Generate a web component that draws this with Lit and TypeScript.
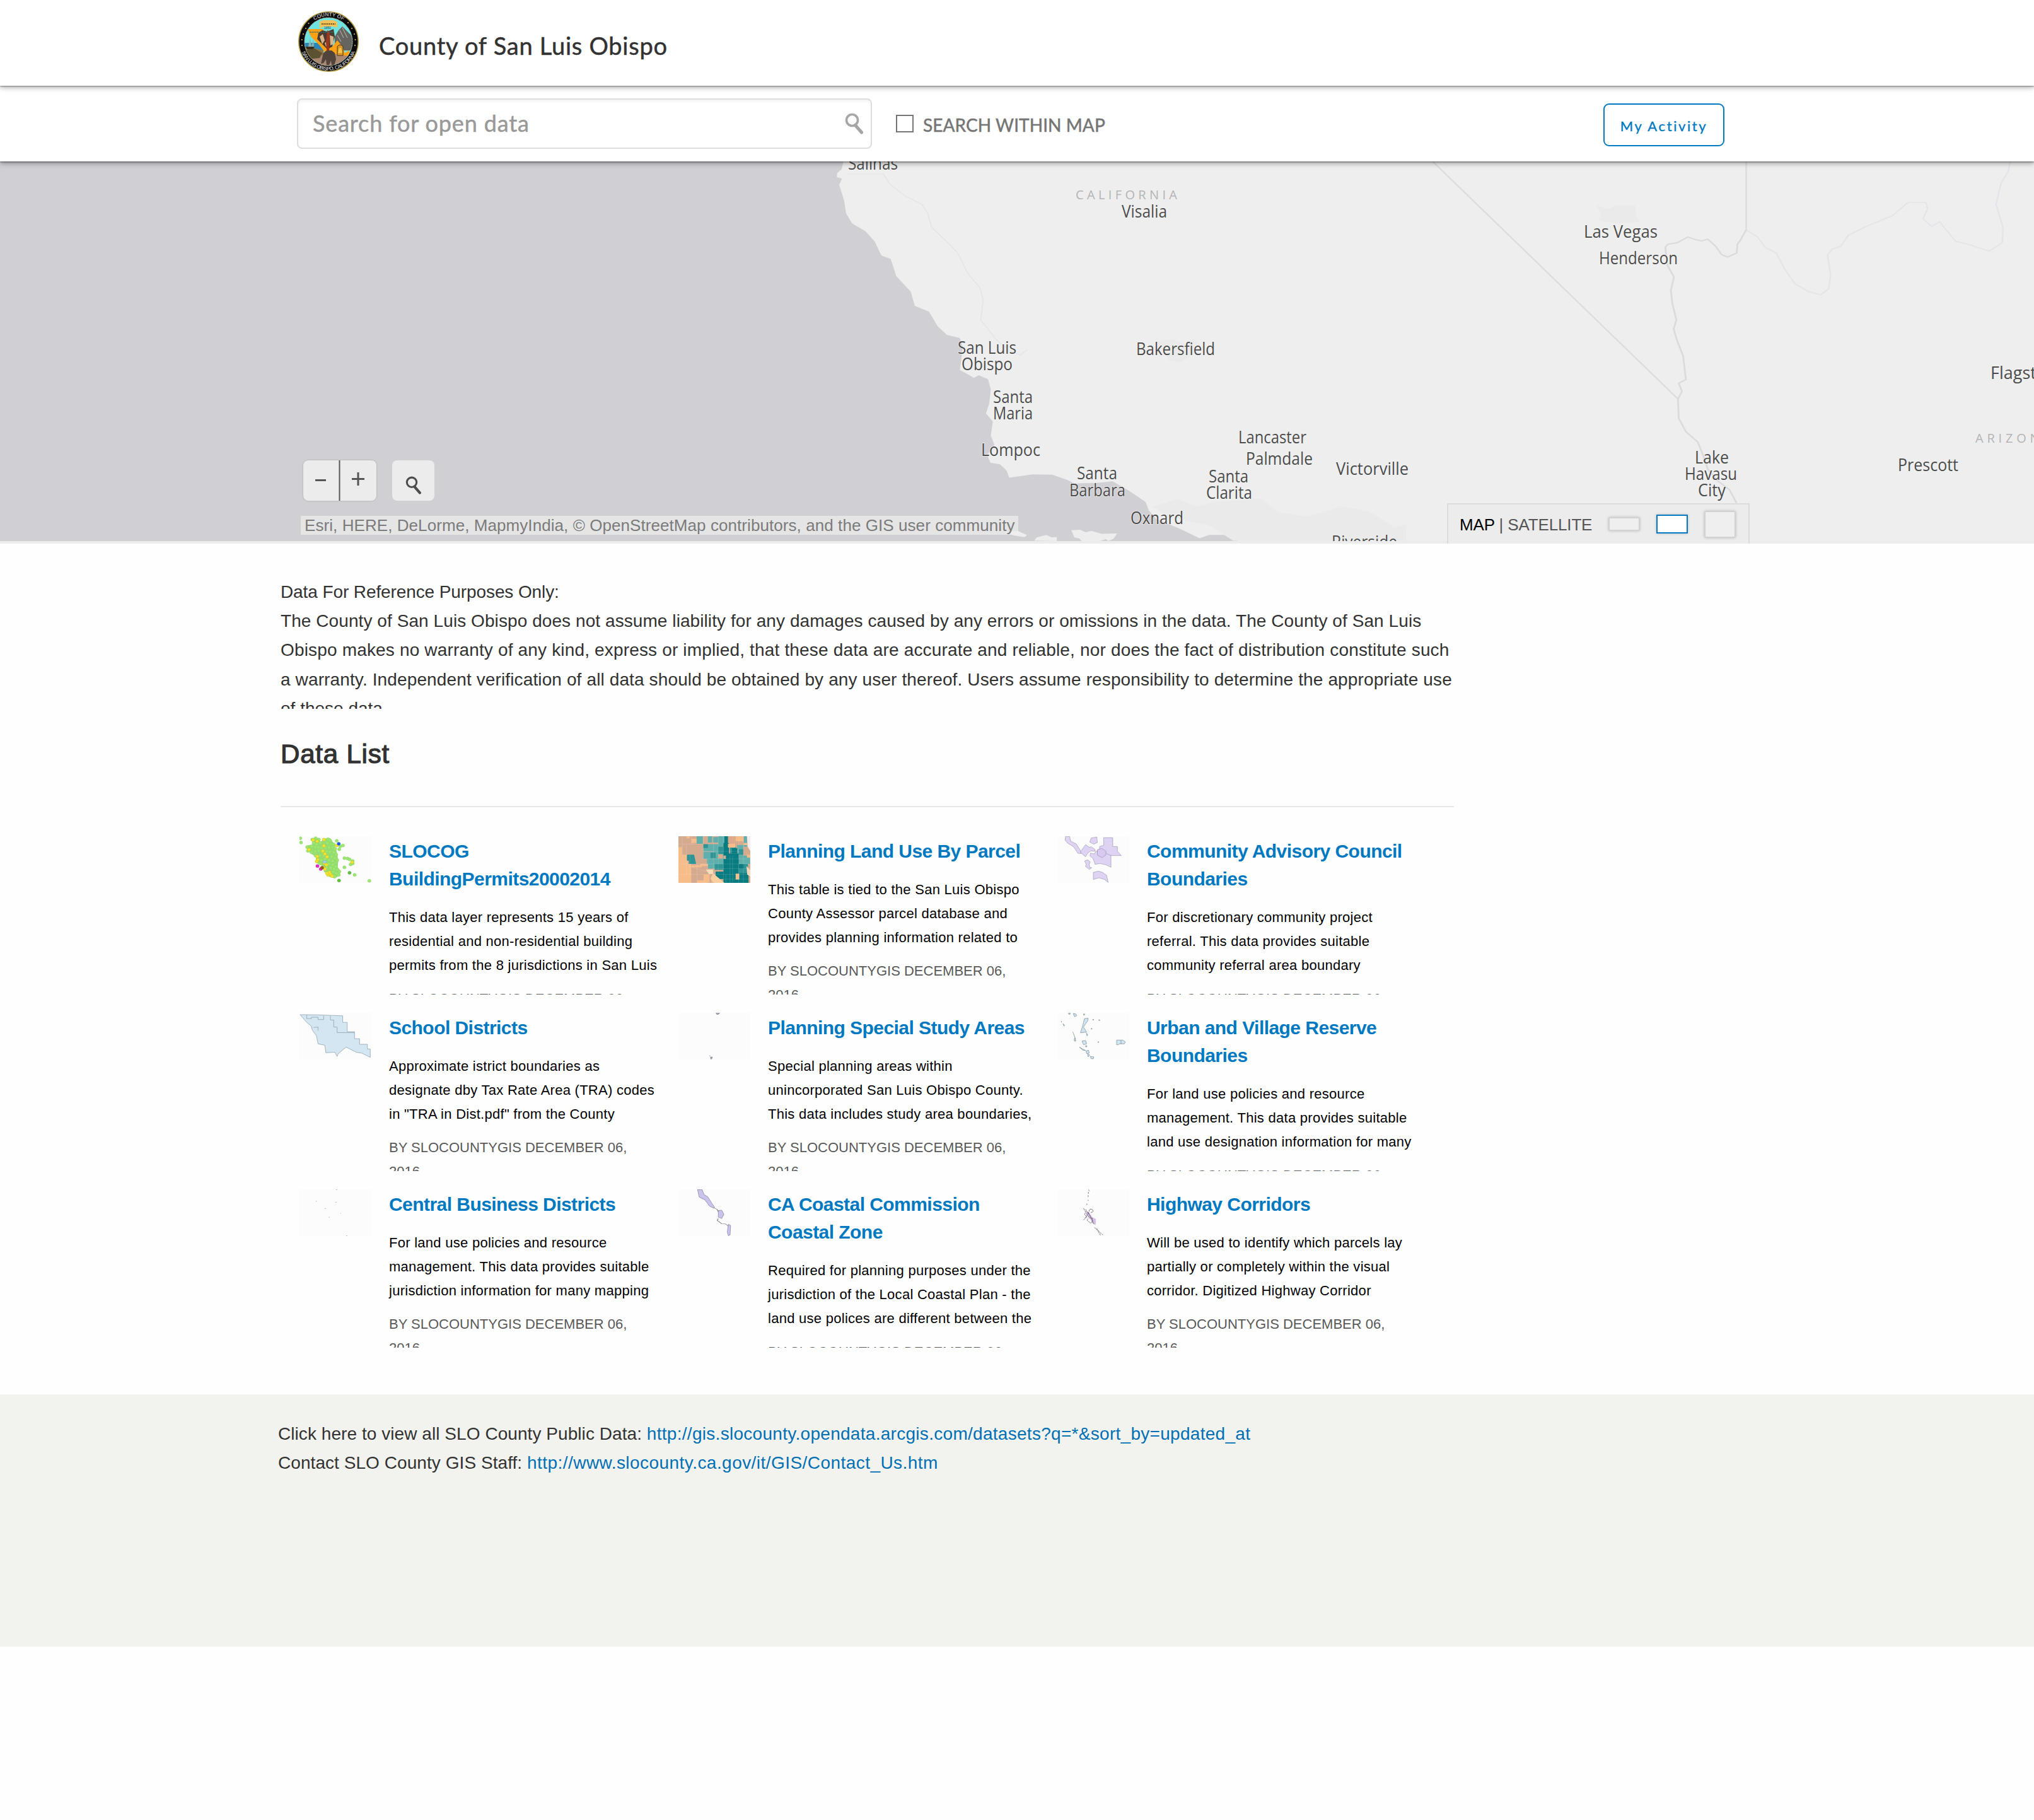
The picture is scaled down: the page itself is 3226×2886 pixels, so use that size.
import { LitElement, html, svg, css } from "lit";
import { customElement, property } from "lit/decorators.js";

type Label = [text: string, x: number, baseline: number, width: number];

const CITIES: Label[] = [
  ["Salinas", 1345, 268.5, 79], ["Visalia", 1779, 344.5, 72],
  ["San Luis", 1519, 560.5, 93], ["Obispo", 1525, 587, 81],
  ["Bakersfield", 1802, 562.5, 125], ["Santa", 1575, 638.5, 63], ["Maria", 1575, 665, 63],
  ["Lompoc", 1556, 722.5, 94], ["Santa", 1708, 760, 64], ["Barbara", 1696, 787, 89],
  ["Oxnard", 1793, 830.5, 84], ["Lancaster", 1964, 702.5, 108], ["Palmdale", 1976, 736.5, 106],
  ["Santa", 1917, 764.5, 63], ["Clarita", 1913, 790.5, 73], ["Victorville", 2119, 752.5, 115],
  ["Riverside", 2112, 868.5, 104], ["Las Vegas", 2512, 376.5, 117], ["Henderson", 2536, 418.5, 125],
  ["Flagstaff", 3157, 600.5, 106], ["Prescott", 3010, 746.5, 96],
  ["Lake", 2688, 734.5, 54], ["Havasu", 2672, 760.5, 83], ["City", 2693, 786.5, 44],
];

const COAST =
  "M0 30 H92 L86 70 L75 84 L74 100 L87 106 L80 130 L92 190 L97 240 L112 280 L145 310 L168 350 L185 405 L208 418 L222 485 L258 545 L268 600 L303 622 L325 680 L348 713 L380 725 L387 760 L385 790 L380 850 L395 862 L415 880 L427 870 L450 885 L457 925 L453 980 L445 1018 L462 1050 L457 1105 L466 1140 L448 1180 L456 1210 L480 1216 L496 1240 L503 1268 L560 1255 L610 1256 L645 1275 L665 1290 L720 1288 L760 1282 L800 1318 L842 1362 L850 1395 L868 1428 L930 1468 L976 1503 L1000 1490 L1055 1490 L1075 1520 H-900 V30 Z";

const mapArt = svg`
  <rect x="0" y="256" width="3226" height="602" fill="#eeeeee"></rect>
  <rect x="0" y="256" width="800" height="602" fill="#d0cfd4"></rect>
  <g transform="translate(1280 240) scale(.63776 .40816)">
    <path d=${COAST} fill="#d0cfd4"></path>
    <path d="M490 1480 l35 -5 l22 16 l-6 8 l-24 -6z M565 1512 l6 -12 l24 -10 l14 10 l12 -2 l0 16z M657 1472 l22 -2 l14 10 l14 -6 l26 12 l38 -2 l-8 20 l-14 10 l-6 -8 l-18 10 l-40 2 l-8 -14 l-12 -4z" fill="#ededed"></path>
    <path d="M100 88 L190 88 L205 125 L240 170 L285 205 L300 240 L310 295 L350 355 L375 395 L400 475 L430 530 L438 580 L432 655 L470 730 L500 770 L530 792 L548 770" fill="none" stroke="#e5e5e7" stroke-width="3"></path>
    <path d="M860 1380 l60 -30 l50 30 l50 -20 l110 -10 l40 50 l70 20 l90 -40 l70 20 l60 60 l30 -10 v63 h-430 l-60 -60 l-60 -20 l-50 -20z M870 740 l40 -10 l30 20 l20 -20 l20 20 l-30 50 l-20 20 l-30 -10z" fill="#eaeaea"></path>
  </g>
  <g transform="translate(2240 130) scale(.62883 .47194)" fill="none" stroke-linejoin="round">
    <path d="M465 415 l30 10 l20 -10 h48 v30 l12 25 l-60 5 l-45 -10 l5 -25z" fill="#eaeaea"></path>
    <path d="M842 497 L870 520 L890 555 L918 575 L940 630 L965 678 L1000 705 L1030 715 L1050 695 L1055 650 L1047 580 L1060 560 L1080 553 L1100 515 L1150 482 L1210 450 L1250 405 L1295 405 L1300 425 L1288 460 L1310 485 L1330 470 L1370 535 L1400 545 L1455 568 L1488 540 L1490 490 L1472 410 L1485 340 L1503 300 L1508 268" stroke="#e5e5e9" stroke-width="4"></path>
    <path d="M52 268 L670 1065 M842 268 V497" stroke="#dcdcdc" stroke-width="4"></path>
    <path d="M842 497 L828 530 L820 545 L818 575 L795 588 L780 580 L765 552 L745 528 L730 534 L715 530 L695 521 L668 540 L645 545 L638 555 L643 615 L660 655 L652 700 L656 745 L666 800 L659 830 L668 870 L683 920 L690 1000 L672 1012 L680 1040 L670 1065 L672 1130 L690 1175 L720 1210 L735 1260 L745 1300 L770 1340 L800 1370 L818 1415" stroke="#dbdbde" stroke-width="4.5"></path>
  </g>
  <g class="city">${CITIES.map(
    ([t, x, y, w]) => svg`<text x=${x} y=${y} textLength=${w} lengthAdjust="spacingAndGlyphs">${t}</text>`
  )}</g>
  <g class="state">
    <text x="1706" y="316" textLength="161">CALIFORNIA</text>
    <text x="3133" y="702" textLength="120">ARIZONA</text>
  </g>`;

const GREEN = [
  [88,118],[91,138],[135,124],[148,118],[160,124],[184,126],[196,122],[204,128],[140,140],[152,146],[166,140],[180,148],[194,142],[208,146],[218,146],
  [115,160],[124,168],[118,178],[134,156],[146,160],[158,160],[170,164],[186,164],[200,162],[214,160],[224,168],[230,130],[244,156],[254,152],[240,170],
  [132,184],[146,180],[160,178],[174,184],[190,180],[204,182],[218,184],[228,196],[148,200],[164,200],[180,200],[196,204],[210,204],[222,212],[232,222],
  [158,218],[170,222],[184,218],[200,222],[214,226],[166,238],[184,240],[200,240],[214,244],[226,252],[190,256],[206,258],[220,264],[232,268],
  [186,272],[202,276],[216,278],[228,284],[240,276],[238,292],[210,290],[222,300],[260,212],[272,214],[280,218],[292,226],[292,238],[284,242],[260,256],[300,292],[357,320],
];
const YELLOW = [[138,126],[154,132],[180,124],[180,154],[122,172],[176,178],[184,192],[192,206],[154,204],[156,220],[152,228],[182,236],[190,244],[178,258],[184,264],[230,152],[290,232],[202,280],[206,290],[212,298],[196,292],[192,284]];

const dots = (pts: number[][], fill: string, stroke: string) =>
  pts.map(([x, y]) => svg`<ellipse cx=${x} cy=${y} rx="6.5" ry="7.5" fill=${fill} stroke=${stroke} stroke-width="1"></ellipse>`);

const tiles = (fill: string, list: number[][]) =>
  list.map(([x, y, w, h]) => svg`<rect x=${x} y=${y} width=${w} height=${h} fill=${fill}></rect>`);

const THUMBS: Record<string, { box: string; art: unknown }> = {
  permits: {
    box: "85 108 280 222",
    art: svg`<path d="M135 116 L160 116 L168 136 L178 120 L205 118 L220 145 L232 190 L236 225 L234 255 L246 275 L240 296 L222 308 L200 300 L186 280 L170 245 L150 235 L148 205 L128 190 L112 165 L114 152 L134 148z" fill="#96de70"></path>
      ${dots(GREEN, "#9ce672", "#86cf62")}${dots(YELLOW, "#f2e32c", "#b4b23c")}
      ${dots([[238,144]], "#2158e0", "#2158e0")}${dots([[183,230]], "#9fd0ea", "#7aaaaa")}
      ${dots([[155,250],[168,264]], "#e52ac0", "#b0209a")}${dots([[173,258]], "#9a5a1e", "#7a4414")}
      ${dots([[280,282],[239,319]], "#62c043", "#4a9a35")}`,
  },
  parcels: {
    box: "61 108 280 222",
    art: svg`<rect x="61" y="108" width="280" height="222" fill="#d5ab90"></rect>
      ${tiles("#f6bd8b", [[61,160,14,80],[61,240,50,90],[76,196,22,44],[92,108,14,10],[112,120,22,20],[146,240,30,10],[112,246,40,10],[160,290,22,38],[190,300,30,28],[284,108,30,24],[134,318,40,12]])}
      ${tiles("#5fb0ad", [[132,108,24,36],[158,146,40,34],[158,182,40,34],[172,216,30,24],[176,108,16,30],[196,112,20,26],[216,108,28,50],[198,146,26,36],[176,240,26,22],[198,180,40,66],[290,150,24,50],[296,200,44,40],[316,108,12,50]])}
      ${tiles("#2f9494", [[158,146,18,18],[186,186,20,26],[202,240,34,28],[216,180,22,12],[262,160,24,30],[296,170,18,26],[296,240,36,46],[216,158,20,22]])}
      ${tiles("#087c80", [[236,140,22,60],[240,108,14,50],[246,190,50,50],[236,216,60,114],[206,276,34,36],[262,210,32,60],[296,240,20,22],[284,284,50,46],[270,165,20,25]])}
      ${tiles("#f6bd8b", [[254,144,28,18],[284,286,14,28],[316,140,14,10],[328,196,13,14]])}
      ${tiles("#dfa98b", [[256,108,28,34],[216,194,18,20]])}
      <path d="M94 196 h28 l8 44 h-28 v-16 h-8z" fill="#2f9494"></path>
      <path d="M196 284 l44 46 h-40 l-14 -20z" fill="#f9cfa0"></path>
      <path d="M168 266 h28 v22 h-16z" fill="#f9dcb8"></path>
      <path d="M328 108 h13 v70 l-10 -20z" fill="#f1efee"></path>
      <path d="M326 250 l15 20 v30 l-12 -10z" fill="#f3d6bb"></path>
      <path d="M61 146 H158 M76 108 V240 M92 146 V290 M106 196 V290 M61 240 H176 M76 290 H186 M134 240 V330 M160 290 V330 M112 108 V146 M61 290 H76 M100 250 l80 30 M158 108 V216 M176 216 V262 M198 108 V290 M216 108 V290 M236 108 V330 M158 180 H300 M158 216 H341 M176 240 H341 M198 262 H341 M246 290 V330 M262 200 V330 M272 200 V330 M296 120 V330 M314 108 V330 M198 290 H341 M206 312 H341" fill="none" stroke="#ffffff" stroke-opacity=".25" stroke-width="1.5"></path>`,
  },
  councils: {
    box: "40 108 280 222",
    art: svg`<g fill="#dfd3f4" stroke="#77718a" stroke-width="1.2">
      <path d="M72 108 l16 1 l4 22 l22 14 l16 32 l2 14 l-12 -2 l-16 -30 l-24 -18 l-10 -14z"></path>
      <path d="M172 116 l22 -4 l2 26 l-14 8 l-16 -10z M220 115 h36 v42 h18 v22 l15 21 h-40 v56 l-20 -12 l-24 -6 l-18 4 l-8 -28 l-12 -12 l2 -14 l14 4 l10 -14 l10 4 l2 -26 l16 -4z"></path>
      <path d="M130 182 l8 -14 l12 -20 l14 12 l8 -2 l14 12 l2 10 l-18 -2 l-14 14 l-6 14 l-14 -14z"></path>
      <path d="M146 226 l12 -6 l10 10 l-4 12 l2 14 l8 2 l-10 8 l-14 -14 l2 -12z M180 280 l20 -6 l16 6 l16 14 l6 34 l-14 -14 l-22 -8 l-22 8z"></path>
      <path d="M196 172 l18 -6 l16 14 l-2 18 l-14 12 l-18 -12z M230 190 l19 10" fill="#d8c8f2"></path></g>`,
  },
  schools: {
    box: "39 71 128 200",
    art: svg`<g fill="#d3e6f2" stroke="#8599a6" stroke-width="1.1">
      <path d="M40 79 L72 80 L116 84 V112 H124 V152 H137 V182 H146 V206 H160 V226 H165 V262 L150 244 L140 240 L122 218 L108 246 L106 258 L102 240 L86 242 L84 210 L72 204 L69 168 L62 146 L60 128 L52 112 Z"></path>
      <path d="M52 80 v16 h8 v-6 h12 v10 h10 v-16 M94 84 v18 h6 v30 h6 v24 h31 M64 134 l8 -2 v16" fill="none"></path></g>`,
  },
  study: {
    box: "711 71 128 200",
    art: svg`<path d="M778 70 h7 l-3 8 l-3 -1z M766 254 l2 4 M768 262 l3 -2 v6 l-2 4z" fill="#aaaabb" stroke="#666677" stroke-width="1"></path>`,
  },
  urban: {
    box: "40 71 280 200",
    art: svg`<g fill="#cfe5f1" stroke="#6d7d88" stroke-width="1.6">
      <path d="M84 72 h6 v5 h-6z M102 74 l10 2 l3 8 l-8 4z M142 76 h4 v4 h-4z M178 99 h3 v3 h-3z M202 100 l4 3 l-4 2z M55 108 h2 v2 h-2z M62 118 l6 6 l-2 4z M146 96 l14 -2 l-2 12 l-8 12 l-8 14 l12 22 l-24 2 l8 -26 l4 -18z"></path>
      <path d="M153 158 l5 6 l-2 6z M172 138 h3 v3 h-3z M100 152 l6 18 l6 22 h-6 v-10 l6 -2 M198 195 h3 v3 h-3z M136 192 l14 -2 l4 14 l-12 4z M150 212 h5 v5 h-5z M126 218 l12 8 l12 6 l-10 0z M152 234 l10 -2 l2 12 l-10 2z M158 248 l8 4 l-6 8z M168 258 l14 2 l-2 8 h-8z"></path>
      <path d="M271 188 h24 l10 8 l-4 8 h-18 l-6 4 h-6z M288 190 v14"></path></g>`,
  },
  business: {
    box: "39 827 128 200",
    art: svg`<path d="M104 828 h2 M68 878 h2 M103 882 h2 M84 909 h2 M112 930 h1 M91 946 h2 M122 1025 h2" stroke="#a4a4a8" stroke-width="2"></path>`,
  },
  coastal: {
    box: "711 827 128 200",
    art: svg`<path d="M745 828 h8 l4 22 l6 8 l8 30 l4 14 l-1 6 l-8 -10 l-8 -26 l-10 -12z M782 918 l6 -2 l4 18 l-4 18 l-6 -6z M800 976 l4 6 l-1 40 l-3 4 l-2 -16z" fill="#cbc3ec" stroke="#77718f" stroke-width="1"></path>
      <path d="M774 905 l6 8 l2 10 M782 952 l-2 8 l8 14 l6 0 l6 10" fill="none" stroke="#777777" stroke-width="1.4"></path>`,
  },
  highway: {
    box: "40 827 280 200",
    art: svg`<path d="M150 918 l14 8 l12 20 l14 8 v24 l-16 -14 l-18 -26z" fill="#d5c0e6"></path>
      <path d="M161 828 l4 6 M161 838 v8 M160 852 v8 M160 872 v4 M155 888 v6 M142 908 l8 16 l-4 12 l10 8 l-14 14 M150 912 l10 20 l6 -20 l10 0 l4 10 l-12 6 M148 950 l14 -20 l16 30 l-8 12 l-14 -12 l4 -10 M152 930 l12 18 l12 2 M176 950 v20 l12 8 M160 926 l22 46 M184 990 l12 12 l8 14 l4 8 M192 994 l16 20 l10 8" fill="none" stroke="#6d6676" stroke-width="2.2" stroke-dasharray="9 2"></path>`,
  },
};

interface Dataset { thumb: string; title: string[]; text: string[]; }

const DATASETS: Dataset[] = [
  { thumb: "permits", title: ["SLOCOG", "BuildingPermits20002014"], text: ["This data layer represents 15 years of", "residential and non-residential building", "permits from the 8 jurisdictions in San Luis"] },
  { thumb: "parcels", title: ["Planning Land Use By Parcel"], text: ["This table is tied to the San Luis Obispo", "County Assessor parcel database and", "provides planning information related to"] },
  { thumb: "councils", title: ["Community Advisory Council", "Boundaries"], text: ["For discretionary community project", "referral. This data provides suitable", "community referral area boundary"] },
  { thumb: "schools", title: ["School Districts"], text: ["Approximate istrict boundaries as", "designate dby Tax Rate Area (TRA) codes", "in \"TRA in Dist.pdf\" from the County"] },
  { thumb: "study", title: ["Planning Special Study Areas"], text: ["Special planning areas within", "unincorporated San Luis Obispo County.", "This data includes study area boundaries,"] },
  { thumb: "urban", title: ["Urban and Village Reserve", "Boundaries"], text: ["For land use policies and resource", "management. This data provides suitable", "land use designation information for many"] },
  { thumb: "business", title: ["Central Business Districts"], text: ["For land use policies and resource", "management. This data provides suitable", "jurisdiction information for many mapping"] },
  { thumb: "coastal", title: ["CA Coastal Commission", "Coastal Zone"], text: ["Required for planning purposes under the", "jurisdiction of the Local Coastal Plan - the", "land use polices are different between the"] },
  { thumb: "highway", title: ["Highway Corridors"], text: ["Will be used to identify which parcels lay", "partially or completely within the visual", "corridor. Digitized Highway Corridor"] },
];

@customElement("county-seal")
export class CountySeal extends LitElement {
  static styles = css`
    :host { display: block; width: 96px; height: 96px; }
    svg { display: block; width: 100%; height: 100%; }
    text { font: 8px "Liberation Sans", sans-serif; fill: #e6e6e6; }
    .scroll { font-size: 5px; fill: #1c3c50; }
  `;
  render() {
    return html`<svg viewBox="0 0 96 96">
      <defs>
        <clipPath id="disc"><circle cx="48" cy="48" r="38"></circle></clipPath>
        <path id="top" d="M7.500 48 A40.500 40.500 0 0 1 88.500 48"></path>
        <path id="low" d="M2.500 48 A45.500 45.500 0 0 0 93.500 48"></path>
      </defs>
      <circle cx="48" cy="48" r="47.200" fill="#0b0b0b" stroke="#b9a24a" stroke-width="1.600"></circle>
      <g clip-path="url(#disc)">
        <rect width="96" height="96" fill="#6fe3e0"></rect>
        <path d="M58 40 L64 30 L70 24 L76 30 L84 38 L90 62 H58z" fill="#66645e"></path>
        <path d="M66 30 l6 12 M70 26 l8 16 M62 38 l6 10" stroke="#aaa59a" stroke-width="1.300"></path>
        <path d="M8 50 H40 V66 H8z" fill="#2d86b6"></path>
        <path d="M8 56 l16 2 l16 4 v10 H8z" fill="#8a7344"></path>
        <path d="M15 28 H40 L42 44 L54 56 L62 46 L70 56 L74 66 L80 62 L84 70 L64 72 L46 70 L34 54 L26 46 L20 40z" fill="#ffa114"></path>
        <path d="M8 66 L40 70 L46 62 L60 68 L88 72 V96 H8z" fill="#a98770"></path>
        <path d="M10 62 l14 -4 l14 8 l-4 8 l-20 2z" fill="#5c5130"></path>
        <path d="M32 34 l6 -4 l8 2 l10 -4 l2 12 l-4 16 l-8 4 l-8 -8 l-8 -8z" fill="#4b3a2e"></path>
        <path d="M34 40 l5 -4 l3 10 l-4 6z M50 38 l6 2 v12 l-5 2z M42 50 l4 -2 l2 6 l-4 2z" fill="#d8b48c"></path>
        <path d="M46 30 l4 2 l-1 34 l-3 4 l-2 -20z" fill="#9a3820"></path>
        <path d="M16 56 l3 -14 l2 14z M21 56 l3 -12 l1 12z" fill="#8fb4b0"></path>
        <path d="M12 56 h14 l-3 4 h-9z" fill="#3a2d1c"></path>
        <path d="M40 66 l5 -4 h8 l5 4 l2 10 l-3 10 h-4 l-1 -8 l-3 7 h-4 l-1 -9 l-4 6 l-4 1 l2 -9z" fill="#52443a"></path>
        <path d="M62 56 a5 5 0 0 1 9 0 v14 h-9z" fill="#d8972c" stroke="#4a3410"></path>
        <path d="M65 58 h3 l2 8 h-7z" fill="#f1c648"></path>
        <path d="M34 16 l6 -2 h16 l6 3 v9 l-7 -2 h-14 l-7 3z" fill="#f2c258"></path>
        <text class="scroll" x="41" y="28">1850</text>
        <path d="M37 20 h22" stroke="#6b4e1c" stroke-width="2" stroke-dasharray="2 1"></path>
        <path d="M18 33 H56" stroke="#2b6f74" stroke-width="1.600" stroke-dasharray="2 1"></path>
      </g>
      <circle cx="48" cy="48" r="38" fill="none" stroke="#d9d9c8" stroke-width="1" stroke-dasharray="1.500 1"></circle>
      <text><textPath href="#top" startOffset="40" textLength="48">COUNTY OF</textPath></text>
      <text><textPath href="#low" startOffset="17" textLength="109">SAN LUIS OBISPO, CALIFORNIA</textPath></text>
      <g fill="#e2c45a"><circle cx="12" cy="27" r="1"></circle><circle cx="16.500" cy="19" r="1"></circle><circle cx="8" cy="36" r="1"></circle><circle cx="5.800" cy="45" r="1"></circle><circle cx="6" cy="54" r="1"></circle>
        <circle cx="79" cy="18" r="1"></circle><circle cx="85" cy="27" r="1"></circle><circle cx="89" cy="36" r="1"></circle><circle cx="90.500" cy="45" r="1"></circle><circle cx="90" cy="54" r="1"></circle></g>
    </svg>`;
  }
}

@customElement("dataset-card")
export class DatasetCard extends LitElement {
  @property({ attribute: false }) data!: Dataset;
  static styles = css`
    :host { display: flex; gap: 28px; height: 251px; overflow: hidden; }
    .thumb { flex: none; width: 114px; height: 74px; background: #fcfcfc; }
    .body { padding-top: 2px; white-space: nowrap; }
    .title { margin: 0 0 20px; font-size: 30px; line-height: 44px; font-weight: bold; letter-spacing: -0.55px; color: #0079c1; }
    .text { margin: 0 0 15px; font-size: 22px; line-height: 38px; letter-spacing: 0.27px; color: #000; }
    .by { margin: 0; font-size: 22px; line-height: 38px; color: #595959; }
  `;
  render() {
    const t = THUMBS[this.data.thumb];
    const lines = (l: string[]) => l.map((s, i) => html`${i ? html`<br>` : ""}${s}`);
    return html`<svg class="thumb" viewBox=${t.box} preserveAspectRatio="none">${t.art}</svg>
      <div class="body">
        <h3 class="title">${lines(this.data.title)}</h3>
        <p class="text">${lines(this.data.text)}</p>
        <p class="by">BY SLOCOUNTYGIS DECEMBER 06,<br>2016</p>
      </div>`;
  }
}

@customElement("app-root")
export class AppRoot extends LitElement {
  static styles = css`
    :host { display: block; min-height: 2886px; background: #fefefe; color: #323232; font-family: "Liberation Sans", Arial, sans-serif; }
    * { box-sizing: border-box; }
    .header { position: relative; z-index: 3; height: 136px; padding: 18px 0 0 473px; display: flex; gap: 32px; background: #fff; box-shadow: 0 1px 2px rgba(0,0,0,.4), 0 3px 8px rgba(0,0,0,.3); }
    .name { margin: 29px 0 0; font: 38px/50px Lato, sans-serif; letter-spacing: 0.75px; -webkit-text-stroke: 0.5px #323232; color: #323232; white-space: nowrap; }
    .bar { position: relative; z-index: 2; height: 120px; padding: 0 491px 0 471px; display: flex; align-items: center; background: #fff; box-shadow: 0 1px 2px rgba(0,0,0,.45), 0 3px 8px rgba(0,0,0,.35); }
    .search { width: 912px; height: 80px; padding: 0 11px 0 23px; display: flex; align-items: center; justify-content: space-between; border: 2px solid #dedede; border-radius: 8px; box-shadow: inset 0 3px 4px rgba(0,0,0,.05); font: 36px/48px Lato, sans-serif; color: #999; -webkit-text-stroke: 0.5px #999; }
    .search span { letter-spacing: 0.85px; margin-top: -2px; }
    .box { width: 28px; height: 28px; margin-left: 38px; border: 2px solid #757575; }
    .within { margin: 3px 0 0 15px; font: 28px/40px Lato, sans-serif; letter-spacing: 0.08px; color: #757575; -webkit-text-stroke: 0.5px #757575; }
    .activity { margin: 4px 0 0 auto; width: 192px; height: 68px; border: 2px solid #0079c1; border-radius: 9px; background: #fff; color: #0079c1; font: 22px/64px Lato, sans-serif; letter-spacing: 2.6px; -webkit-text-stroke: 0.4px #0079c1; text-align: center; padding: 2px 0 0; }
    .map { position: relative; height: 606px; background: #ececec; overflow: hidden; }
    .canvas { display: block; width: 3226px; height: 602px; }
    .city text { font: 27px "Open Sans", sans-serif; fill: #4c4c4c; paint-order: stroke; stroke: #f3f3f3; stroke-width: 2px; stroke-opacity: .7; }
    .state text { font: 20px "Open Sans", sans-serif; fill: #b4b4b4; }
    .controls { position: absolute; left: 481px; top: 474px; display: flex; gap: 25px; }
    .zoom { display: flex; width: 116px; height: 64px; border-radius: 8px; background: #ececec; box-shadow: 0 0 2px 1px rgba(0,0,0,.1); }
    .zoom svg { width: 116px; height: 64px; }
    .find { width: 67px; height: 64px; border-radius: 8px; background: #ececec; padding: 25px 0 0 21px; }
    .find svg { display: block; }
    .credit { position: absolute; left: 477px; top: 562px; width: 1138px; height: 30px; padding-left: 6px; background: rgba(238,238,238,.7); color: #7b7b7b; font-size: 26px; line-height: 31px; letter-spacing: 0.07px; white-space: nowrap; }
    .layers { position: absolute; left: 2295px; top: 542px; width: 480px; height: 64px; padding-left: 18px; display: flex; align-items: center; border: 2px solid #dcdcdc; border-bottom: 0; background: #ececec; color: #555; font-size: 26px; white-space: nowrap; }
    .layers b { font-weight: normal; color: #000; }
    .mode { flex: none; letter-spacing: -0.14px; width: 236px; margin-top: 2px; }
    .size { flex: none; width: 50px; margin-right: 26px; border: 2px solid #d2d2d2; border-radius: 3px; background: #efefef; box-shadow: 0 0 4px rgba(0,0,0,.2); }
    .short { height: 22px; }
    .tall { height: 43px; margin-right: 0; }
    .chosen { height: 30px; border-color: #0079c1; background: #fff; border-radius: 0; }
    .main { padding: 54px 0 0 445px; }
    .intro { margin: 0; height: 208px; overflow: hidden; font-size: 28px; line-height: 46.2px; white-space: nowrap; }
    .tight { letter-spacing: -0.1px; }
    .l2 { letter-spacing: 0.075px; }
    .l3 { letter-spacing: 0.165px; }
    .l4 { letter-spacing: 0.125px; }
    .heading { margin: 42px 0 52px; font-size: 42px; line-height: 60px; font-weight: normal; letter-spacing: 0.8px; -webkit-text-stroke: 1.2px #323232; }
    .list { width: 1861px; padding: 46px 0 0 30px; border-top: 2px solid #e6e6e6; display: grid; grid-template-columns: repeat(3, 601px); row-gap: 29px; }
    .footer { margin-top: 74px; height: 400px; padding: 40px 0 0 441px; background: #f2f3ee; font-size: 28px; line-height: 46px; letter-spacing: 0.06px; }
    .footer p { margin: 0; }
    .link { color: #0070b5; letter-spacing: 0.29px; }
    .wide { letter-spacing: 0.45px; }
  `;

  private glass(color: string, width: number, height: number) {
    return html`<svg viewBox="0 0 30 34" width=${width} height=${height}>
      <circle cx="11.500" cy="11.500" r="9" fill="none" stroke=${color} stroke-width="3.600"></circle>
      <path d="M16.500 19.500 L26.500 31" stroke=${color} stroke-width="5" stroke-linecap="round"></path></svg>`;
  }

  render() {
    return html`
      <header class="header"><county-seal></county-seal><h1 class="name">County of San Luis Obispo</h1></header>
      <div class="bar">
        <div class="search"><span>Search for open data</span>${this.glass("#a6a6a6", 30, 34)}</div>
        <div class="box"></div><div class="within">SEARCH WITHIN MAP</div>
        <button class="activity">My Activity</button>
      </div>
      <section class="map">
        <svg class="canvas" viewBox="0 256 3226 602">${mapArt}</svg>
        <div class="controls">
          <div class="zoom"><svg viewBox="0 0 116 64"><path d="M57.500 -1 V65" stroke="#555555" stroke-width="2"></path><path d="M19 31.500 H36 M77 29.500 H97" stroke="#555555" stroke-width="3"></path><path d="M87 19 V40" stroke="#555555" stroke-width="3"></path></svg></div>
          <div class="find">${this.glass("#4c4c4c", 26, 29)}</div>
        </div>
        <div class="credit">Esri, HERE, DeLorme, MapmyIndia, © OpenStreetMap contributors, and the GIS user community</div>
        <div class="layers"><span class="mode"><b>MAP</b> | SATELLITE</span><i class="size short"></i><i class="size chosen"></i><i class="size tall"></i></div>
      </section>
      <main class="main">
        <p class="intro"><span class="tight">Data For Reference Purposes Only:</span><br><span class="l2">The County of San Luis Obispo does not assume liability for any damages caused by any errors or omissions in the data. The County of San Luis</span><br><span class="l3">Obispo makes no warranty of any kind, express or implied, that these data are accurate and reliable, nor does the fact of distribution constitute such</span><br><span class="l4">a warranty. Independent verification of all data should be obtained by any user thereof. Users assume responsibility to determine the appropriate use</span><br>of these data.</p>
        <h2 class="heading">Data List</h2>
        <div class="list">${DATASETS.map((d) => html`<dataset-card .data=${d}></dataset-card>`)}</div>
      </main>
      <footer class="footer">
        <p>Click here to view all SLO County Public Data: <a class="link">http://gis.slocounty.opendata.arcgis.com/datasets?q=*&amp;sort_by=updated_at</a></p>
        <p>Contact SLO County GIS Staff: <a class="link wide">http://www.slocounty.ca.gov/it/GIS/Contact_Us.htm</a></p>
      </footer>`;
  }
}
